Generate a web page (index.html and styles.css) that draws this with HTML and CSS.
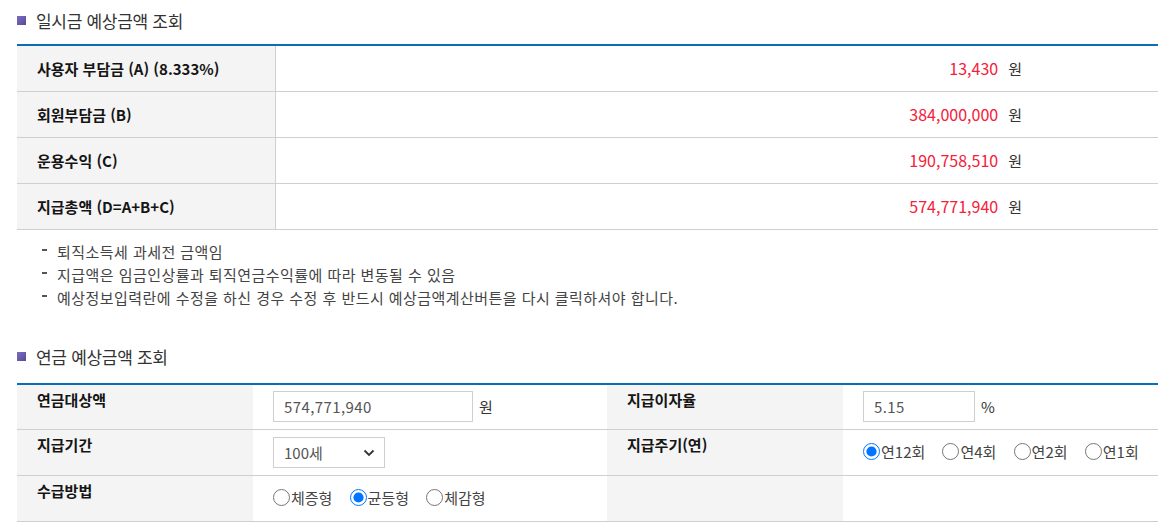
FILE: index.html
```html
<!DOCTYPE html>
<html lang="ko">

<head>
    <meta charset="UTF-8">
    <meta name="viewport" content="width=device-width, initial-scale=1.0">
    <title>예상금액 조회</title>
    <link rel="stylesheet" href="styles.css">
</head>

<body>
    <div class="content">
        <!-- 일시금 -->
        <h3 class="tit">일시금 예상금액 조회</h3>
        <table class="tbl-lump">
            <colgroup>
                <col class="col-label">
                <col>
            </colgroup>
            <tbody>
                <tr>
                    <th>사용자 부담금 (A) (8.333%)</th>
                    <td><span class="amount">13,430</span><span class="unit">원</span></td>
                </tr>
                <tr>
                    <th>회원부담금 (B)</th>
                    <td><span class="amount">384,000,000</span><span class="unit">원</span></td>
                </tr>
                <tr>
                    <th>운용수익 (C)</th>
                    <td><span class="amount">190,758,510</span><span class="unit">원</span></td>
                </tr>
                <tr>
                    <th>지급총액 (D=A+B+C)</th>
                    <td><span class="amount">574,771,940</span><span class="unit">원</span></td>
                </tr>
            </tbody>
        </table>

        <ul class="notes">
            <li>퇴직소득세 과세전 금액임</li>
            <li>지급액은 임금인상률과 퇴직연금수익률에 따라 변동될 수 있음</li>
            <li>예상정보입력란에 수정을 하신 경우 수정 후 반드시 예상금액계산버튼을 다시 클릭하셔야 합니다.</li>
        </ul>

        <!-- 연금 -->
        <h3 class="tit">연금 예상금액 조회</h3>
        <table class="tbl-pension">
            <colgroup>
                <col class="col-l1">
                <col class="col-v1">
                <col class="col-l2">
                <col>
            </colgroup>
            <tbody>
                <tr>
                    <th>연금대상액</th>
                    <td><input type="text" class="inp inp-amount" value="574,771,940"><span class="unit-after">원</span></td>
                    <th>지급이자율</th>
                    <td><input type="text" class="inp inp-rate" value="5.15"><span class="unit-after">%</span></td>
                </tr>
                <tr>
                    <th>지급기간</th>
                    <td>
                        <span class="select-wrap">
                            <select class="sel">
                                <option>100세</option>
                                <option>90세</option>
                                <option>80세</option>
                            </select>
                            <svg class="chev" width="12" height="8" viewBox="0 0 12 8"><path d="M1.5 1.5 L6 6 L10.5 1.5" fill="none" stroke="#333" stroke-width="1.8"/></svg>
                        </span>
                    </td>
                    <th>지급주기(연)</th>
                    <td class="nowrap">
                        <label class="rd"><input type="radio" name="cycle" checked>연12회</label>
                        <label class="rd"><input type="radio" name="cycle">연4회</label>
                        <label class="rd"><input type="radio" name="cycle">연2회</label>
                        <label class="rd"><input type="radio" name="cycle">연1회</label>
                    </td>
                </tr>
                <tr>
                    <th>수급방법</th>
                    <td class="nowrap">
                        <label class="rd"><input type="radio" name="method">체증형</label>
                        <label class="rd"><input type="radio" name="method" checked>균등형</label>
                        <label class="rd"><input type="radio" name="method">체감형</label>
                    </td>
                    <th></th>
                    <td></td>
                </tr>
            </tbody>
        </table>
    </div>
</body>

</html>
```

FILE: styles.css
```css
/* General */
body {
    margin: 0;
    padding: 0;
    font-family: "Noto Sans CJK KR", "Noto Sans", sans-serif;
    color: #333;
    background: #fff;
    overflow: hidden;
}

.content {
    padding-left: 17px;
}

/* Section title */
.tit {
    display: flex;
    align-items: center;
    margin: 0;
    height: 40px;
    font-size: 17px;
    font-weight: 400;
    color: #333;
    letter-spacing: -0.3px;
}

.tit::before {
    content: "";
    width: 9px;
    height: 9px;
    margin-right: 10px;
    background: linear-gradient(135deg, #7a6cc0, #5a4a98);
}

/* Tables */
table {
    width: 100%;
    border-collapse: collapse;
    border-top: 2px solid #0b6db5;
    table-layout: fixed;
}

th,
td {
    border-bottom: 1px solid #cfcfcf;
    font-size: 15px;
    height: 46px;
    box-sizing: border-box;
}

th {
    background: #f4f4f4;
    color: #151515;
    font-weight: 700;
    text-align: left;
    padding: 0 0 0 20px;
}

.tbl-lump {
    margin-top: 4px;
}

.tbl-lump .col-label {
    width: 258px;
}

.tbl-lump th {
    border-right: 1px solid #cfcfcf;
}

.tbl-lump td {
    text-align: right;
    padding-right: 136px;
}

.amount {
    font-size: 16px;
    color: #f5203a;
}

.unit {
    margin-left: 10px;
    font-size: 15px;
    color: #333;
}

/* Notes */
.notes {
    list-style: none;
    margin: 10px 0 0;
    padding: 0 0 0 25px;
}

.notes li {
    position: relative;
    padding-left: 15px;
    font-size: 15px;
    line-height: 23px;
    color: #444;
    letter-spacing: 0.45px;
}

.notes li::before {
    content: "";
    position: absolute;
    left: 0;
    top: 9px;
    width: 5px;
    height: 2px;
    background: #555;
}

.notes + .tit {
    margin-top: 28px;
}

/* Pension table */
.tbl-pension {
    margin-top: 6px;
}

.tbl-pension .col-l1 {
    width: 236px;
}

.tbl-pension .col-v1 {
    width: 354px;
}

.tbl-pension .col-l2 {
    width: 236px;
}

.tbl-pension th {
    vertical-align: top;
    padding-top: 4px;
}

.tbl-pension td {
    padding: 0 0 0 20px;
    vertical-align: middle;
    color: #333;
}

.nowrap {
    white-space: nowrap;
}

.inp {
    height: 31px;
    box-sizing: border-box;
    border: 1px solid #cfcfcf;
    padding: 0 10px;
    font-family: inherit;
    font-size: 15px;
    color: #555;
    letter-spacing: 0.4px;
    vertical-align: middle;
}

.inp-amount {
    width: 200px;
}

.inp-rate {
    width: 112px;
}

.unit-after {
    margin-left: 6px;
    vertical-align: middle;
}

.select-wrap {
    position: relative;
    display: inline-block;
    vertical-align: middle;
}

.sel {
    appearance: none;
    width: 112px;
    height: 31px;
    border: 1px solid #cfcfcf;
    background: #fff;
    padding: 0 10px;
    font-family: inherit;
    font-size: 15px;
    color: #555;
    display: block;
}

.chev {
    position: absolute;
    right: 10px;
    top: 12px;
    pointer-events: none;
}

.rd {
    display: inline-flex;
    align-items: center;
    margin-right: 13px;
    font-size: 15px;
    color: #444;
}

.rd input {
    width: 17px;
    height: 17px;
    margin: 0 1px 0 0;
}
```
